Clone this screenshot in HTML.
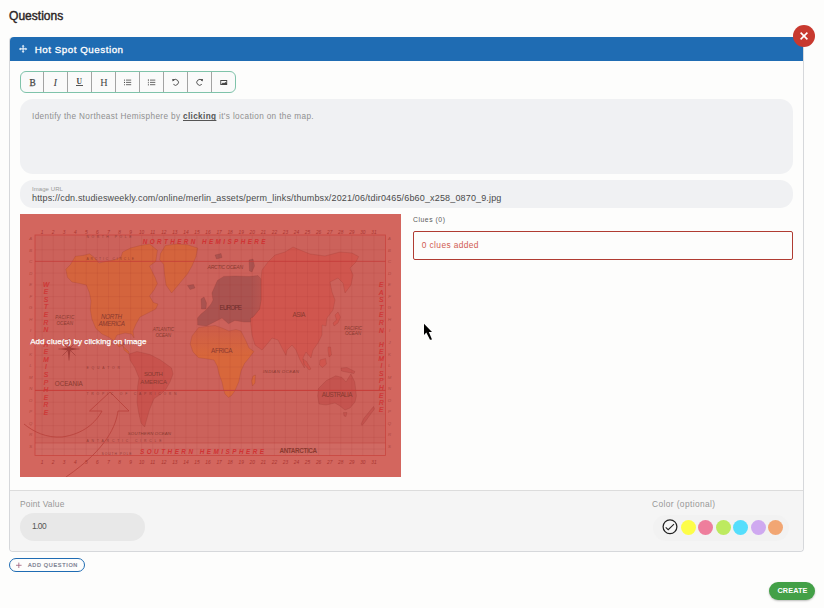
<!DOCTYPE html>
<html lang="en">
<head>
<meta charset="utf-8">
<title>Questions</title>
<style>
*{box-sizing:border-box;margin:0;padding:0}
html,body{width:824px;height:608px;overflow:hidden;background:#fdfdfc;font-family:"Liberation Sans",sans-serif;color:#444}
.abs{position:absolute}
.t{position:absolute;white-space:nowrap;line-height:1}
#title{left:9.2px;top:10.2px;font-size:12px;font-weight:400;-webkit-text-stroke:.4px #2b2424;color:#2b2424;transform-origin:0 0;transform:scaleX(1.005)}
#card{left:9px;top:37px;width:795px;height:515px;border:1px solid #d6d8db;border-top:none;border-radius:4px;background:#fdfdfc}
#hdr{left:10px;top:37px;width:793px;height:24px;background:#1f6cb3;border-radius:4px 4px 0 0}
#hdrtxt{left:34.7px;top:44.7px;font-size:9.8px;color:#fff;-webkit-text-stroke:.3px #fff;letter-spacing:0.520px}
#close{left:793px;top:25px;width:22px;height:22px;border-radius:50%;background:#c8392f}
#tb{left:20px;top:71px;width:216px;height:22px;border:1px solid #7fc3aa;border-radius:6px;background:#fafafa;overflow:hidden}
#tb i{position:absolute;top:0;width:1px;height:20px;background:#a3a3a3}
.tbi{font-family:"Liberation Serif",serif;font-size:9.5px;color:#444}
#ta{left:20px;top:99px;width:773px;height:75px;border-radius:13px;background:#f0f1f3}
#tatxt{left:32px;top:113.4px;font-size:8.2px;color:#8f8f8f;letter-spacing:0.366px}
#tatxt b{color:#555;text-decoration:underline}
#url{left:20px;top:180px;width:773px;height:28px;border-radius:13px;background:#f0f1f3}
#urllbl{left:32px;top:185.6px;font-size:6px;color:#999;letter-spacing:0.071px}
#urltxt{left:32px;top:194.2px;font-size:9px;color:#4a4a4a;letter-spacing:0.158px}
#map{left:20px;top:214px;width:381px;height:263px;background:#d3655d;overflow:hidden}
#maptxt{left:30.2px;top:338.2px;font-size:8px;color:#fff;-webkit-text-stroke:.25px #fff;letter-spacing:0.053px}
#clueslbl{left:413px;top:217.1px;font-size:6.8px;color:#5a5a5a;letter-spacing:0.547px}
#cluesbox{left:413px;top:231px;width:380px;height:29px;border:1px solid #b03c32;border-radius:2px;background:#fdfdfc}
#cluestxt{left:421.8px;top:240.9px;font-size:8.4px;color:#d05a50;letter-spacing:0.380px}
#foot{left:10px;top:490px;width:793px;height:61px;background:#f5f5f5;border-top:1px solid #dcdcdc;border-radius:0 0 4px 4px}
#pvlbl{left:20px;top:499.9px;font-size:8.4px;color:#979797;letter-spacing:0.207px}
#pv{left:20px;top:513px;width:125px;height:28px;border-radius:14px;background:#e8e8e8}
#pvtxt{left:32px;top:521.9px;font-size:8.4px;color:#555;letter-spacing:-0.578px}
#collbl{left:652px;top:499.9px;font-size:8.4px;color:#979797;letter-spacing:0.390px}
#colpill{left:653px;top:515px;width:136px;height:26px;border-radius:13px;background:#f2f2f2}
.dot{position:absolute;top:519.5px;width:15px;height:15px;border-radius:50%}
#addq{left:9px;top:558px;width:76px;height:14px;border:1px solid #1f6cb3;border-radius:7px;background:#fdfdfc}
#addqtxt{left:28px;top:563.3px;font-size:5.5px;color:#74788a;letter-spacing:0.677px;font-weight:400;-webkit-text-stroke:.2px #74788a}
#create{left:769px;top:582px;width:46px;height:18px;border-radius:9px;background:#43a047;box-shadow:0 1px 2px rgba(0,0,0,.25)}
#createtxt{left:777.5px;top:586.8px;font-size:7.3px;color:#fff;font-weight:700;letter-spacing:0.089px}
</style>
</head>
<body>
<div id="title" class="t">Questions</div>

<div id="card" class="abs"></div>
<div id="hdr" class="abs"></div>
<svg class="abs" style="left:18px;top:44px" width="11" height="11" viewBox="-5.5 -5.5 11 11"><g transform="translate(-.4 -.6)"><path d="M0 -4.2 L1.5 -2.4 H.55 V-.55 H2.4 V-1.5 L4.2 0 L2.4 1.5 V.55 H.55 V2.4 H1.5 L0 4.2 L-1.5 2.4 H-.55 V.55 H-2.4 V1.5 L-4.2 0 L-2.4 -1.5 V-.55 H-.55 V-2.4 H-1.5 Z" fill="#e8f1fa"/></g></svg>
<div id="hdrtxt" class="t">Hot Spot Question</div>
<div id="close" class="abs"><svg width="22" height="22" viewBox="0 0 22 22"><path d="M7.6 7.6 L14.4 14.4 M14.4 7.6 L7.6 14.4" stroke="#fff" stroke-width="1.6" fill="none"/></svg></div>

<div id="tb" class="abs">
<i style="left:22px"></i><i style="left:46px"></i><i style="left:70px"></i><i style="left:94px"></i><i style="left:118px"></i><i style="left:142px"></i><i style="left:166px"></i><i style="left:190px"></i>
</div>
<div class="t tbi" style="left:29.6px;top:78.6px;font-size:9.3px;-webkit-text-stroke:.25px #444">B</div>
<div class="t tbi" style="left:53.8px;top:78.6px;font-style:italic;font-size:9.3px;-webkit-text-stroke:.15px #444">I</div>
<div class="t tbi" style="left:76.4px;top:78.4px;font-size:7.6px;font-weight:700">U</div>
<div class="abs" style="left:76.2px;top:85px;width:7.2px;height:1px;background:#555"></div>
<div class="t tbi" style="left:100.3px;top:78px;font-size:10.2px">H</div>
<svg class="abs" style="left:116px;top:71px" width="120" height="22" viewBox="116 71 120 22">
<g fill="none" stroke="#444" stroke-width=".8">
<path d="M126 80.1H131.2M126 82.4H131.2M126 84.7H131.2"/>
<path d="M150 80.1H155.3M150 82.4H155.3M150 84.7H155.3"/>
<path d="M148.4 79.2V81M148.4 81.8V83.2M148.4 83.9V85.5" stroke-width=".7"/>
<path d="M173.2 80.6 A2.9 2.9 0 1 1 173.4 84.3" stroke-width=".9"/>
<path d="M202 80.6 A2.9 2.9 0 1 0 201.8 84.3" stroke-width=".9"/>
</g>
<g fill="#444">
<circle cx="124.5" cy="80.1" r=".55"/><circle cx="124.5" cy="82.4" r=".55"/><circle cx="124.5" cy="84.7" r=".55"/>
<path d="M172.2 78.9 L175 79.2 L172.6 81.6Z"/>
<path d="M203 78.9 L200.2 79.2 L202.6 81.6Z"/>
<path d="M220.3 80H227.2V85.1H220.3Z M221.2 80.9V84.2L223 82.4L224 83.3L225.4 81.9L226.3 82.8V80.9Z" fill-rule="evenodd"/>
</g>
</svg>

<div id="ta" class="abs"></div>
<div id="tatxt" class="t">Identify the Northeast Hemisphere by <b>clicking</b> it's location on the map.</div>

<div id="url" class="abs"></div>
<div id="urllbl" class="t">Image URL</div>
<div id="urltxt" class="t">https://cdn.studiesweekly.com/online/merlin_assets/perm_links/thumbsx/2021/06/tdir0465/6b60_x258_0870_9.jpg</div>

<div id="map" class="abs"></div>
<!--MAP-->
<svg class="abs" id="mapsvg" style="left:20px;top:214px" width="381" height="263" viewBox="20 214 381 263" font-family="Liberation Sans, sans-serif">
<defs><linearGradient id="eug" gradientUnits="userSpaceOnUse" x1="250" y1="0" x2="262" y2="0"><stop offset="0" stop-color="#aa5350"/><stop offset="1" stop-color="#b85550"/></linearGradient><linearGradient id="afg" gradientUnits="userSpaceOnUse" x1="0" y1="326" x2="0" y2="356"><stop offset="0" stop-color="#cd5d49"/><stop offset="1" stop-color="#d8673b"/></linearGradient></defs>
<rect x="20" y="214" width="381" height="263" fill="#d3665e"/>
<rect x="35" y="235" width="350.5" height="220.5" fill="#cc625b"/>
<rect x="35" y="443" width="350.5" height="12.5" fill="#d06a63"/>
<polygon points="268.0,262.0 275.0,255.0 285.0,252.0 293.0,247.0 300.0,250.0 310.0,254.0 325.0,256.0 340.0,252.0 352.0,253.0 358.7,256.6 356.0,262.0 350.0,268.0 353.0,275.0 351.0,285.0 345.0,293.0 343.0,283.0 338.0,278.0 330.0,282.0 332.0,292.0 335.0,300.0 333.0,310.0 327.0,318.0 326.0,326.0 322.0,325.0 322.0,335.0 318.0,343.0 313.0,350.0 311.0,358.0 306.0,352.0 303.0,358.0 304.5,368.0 300.0,360.0 296.0,350.0 292.0,345.0 287.0,350.0 286.0,355.5 282.0,348.0 278.0,340.0 272.0,338.0 268.0,343.0 262.0,350.0 255.0,345.0 252.0,335.0 250.6,322.0 250.6,318.0 253.0,317.0 259.5,309.0 261.0,300.0 261.0,279.0 262.0,270.0" fill="#d0564e" stroke="rgba(120,40,35,.3)" stroke-width=".5" stroke-linejoin="round"/>
<polygon points="197.7,325.0 197.5,318.0 201.0,314.0 206.0,310.0 211.0,304.0 213.0,300.0 211.9,293.0 217.4,280.4 223.7,276.4 235.0,276.0 249.0,276.5 258.0,275.6 261.0,279.0 261.0,300.0 259.5,309.0 253.0,317.0 250.6,318.0 250.6,322.0 244.0,322.0 234.8,320.5 228.5,323.7 222.0,318.0 214.3,322.0 206.4,326.0" fill="url(#eug)" stroke="rgba(120,40,35,.3)" stroke-width=".5" stroke-linejoin="round"/>
<polygon points="201.0,299.0 204.0,297.0 206.5,303.0 206.0,309.0 201.5,309.0" fill="#aa5350" stroke="rgba(120,40,35,.3)" stroke-width=".5" stroke-linejoin="round"/>
<polygon points="187.5,285.5 193.5,284.5 195.0,288.0 190.0,289.5" fill="#aa5350" stroke="rgba(120,40,35,.3)" stroke-width=".5" stroke-linejoin="round"/>
<polygon points="249.0,260.0 253.0,259.0 254.5,266.0 252.0,272.0 249.5,271.0" fill="#aa5350" stroke="rgba(120,40,35,.3)" stroke-width=".5" stroke-linejoin="round"/>
<polygon points="215.0,255.0 221.0,253.5 222.0,257.5 216.5,259.0" fill="#aa5350" stroke="rgba(120,40,35,.3)" stroke-width=".5" stroke-linejoin="round"/>
<polygon points="75.3,256.3 83.2,255.4 89.5,253.8 94.2,257.4 99.0,263.0 106.0,261.4 114.8,259.8 121.0,257.0 122.7,252.0 130.6,248.0 140.0,245.6 149.5,244.0 157.4,250.3 155.8,261.4 149.5,266.0 155.0,277.2 157.4,283.5 154.2,289.8 149.5,296.0 153.4,302.5 158.0,304.0 155.8,309.0 146.0,314.0 140.0,317.0 136.0,324.0 133.0,331.0 134.0,338.0 131.5,334.0 125.0,333.0 117.0,335.0 114.0,341.0 119.0,347.0 123.0,345.0 124.0,350.0 129.0,354.0 129.0,352.0 122.7,346.0 114.8,341.4 108.5,337.0 102.0,334.0 95.8,328.4 91.9,319.0 90.3,309.5 91.0,301.0 89.5,293.0 86.3,285.0 80.0,283.5 72.0,282.0 67.4,277.2 65.8,269.3 70.5,264.5" fill="#d4643d" stroke="rgba(120,40,35,.3)" stroke-width=".5" stroke-linejoin="round"/>
<polygon points="160.5,253.5 165.3,245.6 176.3,244.0 187.4,244.8 197.7,248.0 196.0,256.7 192.0,266.0 187.4,274.0 179.5,283.5 171.6,293.0 166.0,285.0 164.5,274.0 163.7,264.5 159.7,259.8" fill="#d4643d" stroke="rgba(120,40,35,.3)" stroke-width=".5" stroke-linejoin="round"/>
<polygon points="129.0,354.0 137.0,351.5 150.0,354.5 160.5,360.0 171.6,368.0 173.0,374.0 170.0,382.0 166.0,389.0 161.0,394.0 154.0,398.6 149.5,409.7 146.3,420.8 144.7,427.0 141.0,423.0 138.5,412.0 137.0,402.0 137.7,386.0 139.0,378.0 135.0,368.0 130.0,360.0" fill="#c8534d" stroke="rgba(120,40,35,.3)" stroke-width=".5" stroke-linejoin="round"/>
<polygon points="198.5,327.6 206.0,326.5 215.0,325.5 222.0,328.0 229.0,331.0 236.0,329.5 241.0,331.0 246.0,341.0 249.0,348.0 254.0,351.5 249.0,358.0 244.5,363.5 241.0,371.0 238.7,382.0 234.8,391.0 231.5,395.5 228.5,397.4 225.0,394.0 223.7,390.0 222.0,382.0 219.0,374.0 217.4,366.4 214.0,360.0 208.0,359.0 198.5,357.7 193.0,352.0 190.2,344.0 192.0,336.0" fill="url(#afg)" stroke="rgba(120,40,35,.3)" stroke-width=".5" stroke-linejoin="round"/>
<polygon points="253.0,376.0 255.5,375.0 255.0,383.0 252.5,386.0 251.5,381.0" fill="#d7673d" stroke="rgba(120,40,35,.3)" stroke-width=".5" stroke-linejoin="round"/>
<polygon points="318.5,388.5 326.3,380.6 335.8,375.8 342.0,377.4 346.0,382.0 350.8,374.0 354.8,382.0 356.4,396.0 355.0,402.0 350.0,408.0 345.0,410.0 340.0,406.0 335.0,403.0 326.0,405.0 319.0,404.0 317.7,396.0" fill="#c5544f" stroke="rgba(120,40,35,.3)" stroke-width=".5" stroke-linejoin="round"/>
<polygon points="343.5,412.5 347.0,412.5 346.0,416.5 344.0,416.0" fill="#c5544f" stroke="rgba(120,40,35,.3)" stroke-width=".5" stroke-linejoin="round"/>
<polygon points="361.0,424.0 364.0,418.0 369.0,412.0 373.5,406.5 374.5,409.0 370.0,415.0 365.0,422.0 362.0,425.5" fill="#c5544f" stroke="rgba(120,40,35,.3)" stroke-width=".5" stroke-linejoin="round"/>
<polygon points="335.0,315.0 338.0,312.0 340.5,317.0 338.0,323.0 334.0,326.0 333.0,323.0 336.5,320.0" fill="#d0564e" stroke="rgba(120,40,35,.3)" stroke-width=".5" stroke-linejoin="round"/>
<polygon points="320.0,360.0 325.5,358.5 326.5,364.0 322.5,367.5 319.5,365.0" fill="#d0564e" stroke="rgba(120,40,35,.3)" stroke-width=".5" stroke-linejoin="round"/>
<polygon points="303.0,359.0 306.5,361.5 311.0,369.0 309.0,370.0 304.5,364.5" fill="#d0564e" stroke="rgba(120,40,35,.3)" stroke-width=".5" stroke-linejoin="round"/>
<polygon points="341.0,368.0 347.0,367.5 355.0,371.5 354.0,373.5 346.0,372.0 341.5,371.0" fill="#c5544f" stroke="rgba(120,40,35,.3)" stroke-width=".5" stroke-linejoin="round"/>
<polygon points="328.0,347.0 330.5,347.0 331.5,355.0 329.0,357.0 328.0,351.0" fill="#d0564e" stroke="rgba(120,40,35,.3)" stroke-width=".5" stroke-linejoin="round"/>
<path d="M42.1 235V455.5M53.2 235V455.5M64.2 235V455.5M75.3 235V455.5M86.3 235V455.5M97.4 235V455.5M108.5 235V455.5M119.5 235V455.5M130.6 235V455.5M141.6 235V455.5M152.7 235V455.5M163.8 235V455.5M174.8 235V455.5M185.9 235V455.5M196.9 235V455.5M208.0 235V455.5M219.1 235V455.5M230.1 235V455.5M241.2 235V455.5M252.2 235V455.5M263.3 235V455.5M274.4 235V455.5M285.4 235V455.5M296.5 235V455.5M307.5 235V455.5M318.6 235V455.5M329.7 235V455.5M340.7 235V455.5M351.8 235V455.5M362.8 235V455.5M373.9 235V455.5M35 249.7H385.5M35 261.4H385.5M35 273.1H385.5M35 284.9H385.5M35 296.6H385.5M35 308.3H385.5M35 320.0H385.5M35 331.8H385.5M35 343.5H385.5M35 355.2H385.5M35 367.0H385.5M35 378.7H385.5M35 390.4H385.5M35 402.2H385.5M35 413.9H385.5M35 425.6H385.5M35 437.4H385.5M35 449.1H385.5" stroke="rgba(150,45,40,.2)" stroke-width=".5" fill="none"/>
<rect x="35" y="235" width="350.5" height="220.5" fill="none" stroke="rgba(200,55,50,.7)" stroke-width=".8"/>
<path d="M35 261.4H385.5" stroke="rgba(199,58,55,.7)" stroke-width=".9"/><path d="M35 390.4H385.5" stroke="#c73d39" stroke-width="1"/>
<path d="M35 443H385.5" stroke="rgba(190,60,55,.6)" stroke-width=".7"/>
<path d="M110 392 L129 411 H118 C116 425 108 448 66 477 M110 392 L89.5 411 H102 C96 422 84 434 62 437 C46 438 34 432 24 424" fill="none" stroke="#b8403a" stroke-width=".8"/>
<g stroke="#9c3a36" stroke-width=".6" fill="none"><path d="M69 338V360.5M58.5 349H79.5M62.5 342.5L75.5 355.5M75.5 342.5L62.5 355.5"/></g>
<path d="M69 341 L70.5 347.5 L77 349 L70.5 350.5 L69 360 L67.5 350.5 L61 349 L67.5 347.5Z" fill="#a23c38"/>
<text x="142.8" y="243.6" font-size="6.3" fill="#cf3333" textLength="122.7" lengthAdjust="spacing" font-style="italic" font-weight="700">NORTHERN HEMISPHERE</text>
<text x="140" y="454" font-size="6.3" fill="#cf3333" textLength="124.0" lengthAdjust="spacing" font-style="italic" font-weight="700">SOUTHERN HEMISPHERE</text>
<text x="46" y="286.5" font-size="6.6" fill="#cf3333" text-anchor="middle" font-style="italic" stroke="#cf3333" stroke-width=".2">W</text>
<text x="46" y="294.1" font-size="6.6" fill="#cf3333" text-anchor="middle" font-style="italic" stroke="#cf3333" stroke-width=".2">E</text>
<text x="46" y="301.7" font-size="6.6" fill="#cf3333" text-anchor="middle" font-style="italic" stroke="#cf3333" stroke-width=".2">S</text>
<text x="46" y="309.3" font-size="6.6" fill="#cf3333" text-anchor="middle" font-style="italic" stroke="#cf3333" stroke-width=".2">T</text>
<text x="46" y="316.9" font-size="6.6" fill="#cf3333" text-anchor="middle" font-style="italic" stroke="#cf3333" stroke-width=".2">E</text>
<text x="46" y="324.5" font-size="6.6" fill="#cf3333" text-anchor="middle" font-style="italic" stroke="#cf3333" stroke-width=".2">R</text>
<text x="46" y="332.1" font-size="6.6" fill="#cf3333" text-anchor="middle" font-style="italic" stroke="#cf3333" stroke-width=".2">N</text>
<text x="46" y="346.5" font-size="6.6" fill="#cf3333" text-anchor="middle" font-style="italic" stroke="#cf3333" stroke-width=".2">H</text>
<text x="46" y="354.1" font-size="6.6" fill="#cf3333" text-anchor="middle" font-style="italic" stroke="#cf3333" stroke-width=".2">E</text>
<text x="46" y="361.7" font-size="6.6" fill="#cf3333" text-anchor="middle" font-style="italic" stroke="#cf3333" stroke-width=".2">M</text>
<text x="46" y="369.3" font-size="6.6" fill="#cf3333" text-anchor="middle" font-style="italic" stroke="#cf3333" stroke-width=".2">I</text>
<text x="46" y="376.9" font-size="6.6" fill="#cf3333" text-anchor="middle" font-style="italic" stroke="#cf3333" stroke-width=".2">S</text>
<text x="46" y="384.5" font-size="6.6" fill="#cf3333" text-anchor="middle" font-style="italic" stroke="#cf3333" stroke-width=".2">P</text>
<text x="46" y="392.1" font-size="6.6" fill="#cf3333" text-anchor="middle" font-style="italic" stroke="#cf3333" stroke-width=".2">H</text>
<text x="46" y="399.7" font-size="6.6" fill="#cf3333" text-anchor="middle" font-style="italic" stroke="#cf3333" stroke-width=".2">E</text>
<text x="46" y="407.3" font-size="6.6" fill="#cf3333" text-anchor="middle" font-style="italic" stroke="#cf3333" stroke-width=".2">R</text>
<text x="46" y="414.9" font-size="6.6" fill="#cf3333" text-anchor="middle" font-style="italic" stroke="#cf3333" stroke-width=".2">E</text>
<text x="381.3" y="287.0" font-size="6.6" fill="#cf3333" text-anchor="middle" font-style="italic" stroke="#cf3333" stroke-width=".2">E</text>
<text x="381.3" y="294.6" font-size="6.6" fill="#cf3333" text-anchor="middle" font-style="italic" stroke="#cf3333" stroke-width=".2">A</text>
<text x="381.3" y="302.2" font-size="6.6" fill="#cf3333" text-anchor="middle" font-style="italic" stroke="#cf3333" stroke-width=".2">S</text>
<text x="381.3" y="309.8" font-size="6.6" fill="#cf3333" text-anchor="middle" font-style="italic" stroke="#cf3333" stroke-width=".2">T</text>
<text x="381.3" y="317.4" font-size="6.6" fill="#cf3333" text-anchor="middle" font-style="italic" stroke="#cf3333" stroke-width=".2">E</text>
<text x="381.3" y="325.0" font-size="6.6" fill="#cf3333" text-anchor="middle" font-style="italic" stroke="#cf3333" stroke-width=".2">R</text>
<text x="381.3" y="332.6" font-size="6.6" fill="#cf3333" text-anchor="middle" font-style="italic" stroke="#cf3333" stroke-width=".2">N</text>
<text x="381.3" y="346.5" font-size="6.6" fill="#cf3333" text-anchor="middle" font-style="italic" stroke="#cf3333" stroke-width=".2">H</text>
<text x="381.3" y="353.8" font-size="6.6" fill="#cf3333" text-anchor="middle" font-style="italic" stroke="#cf3333" stroke-width=".2">E</text>
<text x="381.3" y="361.1" font-size="6.6" fill="#cf3333" text-anchor="middle" font-style="italic" stroke="#cf3333" stroke-width=".2">M</text>
<text x="381.3" y="368.4" font-size="6.6" fill="#cf3333" text-anchor="middle" font-style="italic" stroke="#cf3333" stroke-width=".2">I</text>
<text x="381.3" y="375.7" font-size="6.6" fill="#cf3333" text-anchor="middle" font-style="italic" stroke="#cf3333" stroke-width=".2">S</text>
<text x="381.3" y="383.0" font-size="6.6" fill="#cf3333" text-anchor="middle" font-style="italic" stroke="#cf3333" stroke-width=".2">P</text>
<text x="381.3" y="390.3" font-size="6.6" fill="#cf3333" text-anchor="middle" font-style="italic" stroke="#cf3333" stroke-width=".2">H</text>
<text x="381.3" y="397.6" font-size="6.6" fill="#cf3333" text-anchor="middle" font-style="italic" stroke="#cf3333" stroke-width=".2">E</text>
<text x="381.3" y="404.9" font-size="6.6" fill="#cf3333" text-anchor="middle" font-style="italic" stroke="#cf3333" stroke-width=".2">R</text>
<text x="381.3" y="412.2" font-size="6.6" fill="#cf3333" text-anchor="middle" font-style="italic" stroke="#cf3333" stroke-width=".2">E</text>
<text x="101" y="319" font-size="6.3" fill="#8a3a30" textLength="21.0" lengthAdjust="spacing" font-style="italic">NORTH</text>
<text x="98.5" y="326" font-size="6.3" fill="#8a3a30" textLength="26.5" lengthAdjust="spacing" font-style="italic">AMERICA</text>
<text x="55.3" y="318.6" font-size="4.6" fill="#8a3a30" textLength="19.0" lengthAdjust="spacing" font-style="italic">PACIFIC</text>
<text x="56.5" y="324.6" font-size="4.6" fill="#8a3a30" textLength="16.5" lengthAdjust="spacing" font-style="italic">OCEAN</text>
<text x="152.8" y="330.6" font-size="4.6" fill="#8a3a30" textLength="21.2" lengthAdjust="spacing" font-style="italic">ATLANTIC</text>
<text x="155.5" y="336.6" font-size="4.6" fill="#8a3a30" textLength="15.5" lengthAdjust="spacing" font-style="italic">OCEAN</text>
<text x="207.5" y="269.3" font-size="5" fill="#8a3a30" textLength="35.5" lengthAdjust="spacing" font-style="italic">ARCTIC OCEAN</text>
<text x="219.5" y="309.5" font-size="6.3" fill="#6e2e2c" textLength="22.5" lengthAdjust="spacing" >EUROPE</text>
<text x="292.5" y="317" font-size="6.3" fill="#8a3a30" textLength="13.0" lengthAdjust="spacing" >ASIA</text>
<text x="344.3" y="329.6" font-size="4.6" fill="#8a3a30" textLength="17.7" lengthAdjust="spacing" font-style="italic">PACIFIC</text>
<text x="345" y="335.4" font-size="4.6" fill="#8a3a30" textLength="16.0" lengthAdjust="spacing" font-style="italic">OCEAN</text>
<text x="211" y="352.8" font-size="6.3" fill="#8a3a30" textLength="21.5" lengthAdjust="spacing" >AFRICA</text>
<text x="263" y="373.3" font-size="4.4" fill="#8a3a30" textLength="36.0" lengthAdjust="spacing" font-style="italic">INDIAN OCEAN</text>
<text x="321.8" y="396.7" font-size="6.3" fill="#8a3a30" textLength="30.7" lengthAdjust="spacing" >AUSTRALIA</text>
<text x="279.5" y="452.5" font-size="6.3" fill="#8a3a30" textLength="37.5" lengthAdjust="spacing" font-weight="700">ANTARCTICA</text>
<text x="144" y="376" font-size="6" fill="#8a3a30" textLength="18.8" lengthAdjust="spacing" >SOUTH</text>
<text x="140.3" y="383.5" font-size="6" fill="#8a3a30" textLength="26.7" lengthAdjust="spacing" >AMERICA</text>
<text x="54.8" y="386" font-size="6.3" fill="#8a3a30" textLength="28.0" lengthAdjust="spacing" >OCEANIA</text>
<text x="127.8" y="434.8" font-size="4.4" fill="#8a3a30" textLength="43.2" lengthAdjust="spacing" font-style="italic">SOUTHERN OCEAN</text>
<text x="86.5" y="238.2" font-size="3.4" fill="rgba(125,45,40,.75)" textLength="45.0" lengthAdjust="spacing" >NORTH POLE</text>
<text x="86.5" y="260.3" font-size="3.4" fill="rgba(125,45,40,.75)" textLength="47.5" lengthAdjust="spacing" >ARCTIC CIRCLE</text>
<text x="86.5" y="345" font-size="3.4" fill="rgba(125,45,40,.75)" textLength="53.5" lengthAdjust="spacing" >TROPIC OF CANCER</text>
<text x="86.5" y="369.2" font-size="3.4" fill="rgba(125,45,40,.75)" textLength="33.5" lengthAdjust="spacing" >EQUATOR</text>
<text x="86.5" y="394.8" font-size="3.4" fill="rgba(125,45,40,.75)" textLength="90.0" lengthAdjust="spacing" >TROPIC OF CAPRICORN</text>
<text x="86.5" y="442.4" font-size="3.4" fill="rgba(125,45,40,.75)" textLength="75.0" lengthAdjust="spacing" >ANTARCTIC CIRCLE</text>
<text x="101.5" y="455" font-size="3.4" fill="rgba(125,45,40,.75)" textLength="30.0" lengthAdjust="spacing" >SOUTH POLE</text>
<text x="42.1" y="234" font-size="4.8" fill="#a93531" text-anchor="middle" font-style="italic">1</text>
<text x="42.1" y="464" font-size="4.8" fill="#a93531" text-anchor="middle" font-style="italic">1</text>
<text x="53.2" y="234" font-size="4.8" fill="#a93531" text-anchor="middle" font-style="italic">2</text>
<text x="53.2" y="464" font-size="4.8" fill="#a93531" text-anchor="middle" font-style="italic">2</text>
<text x="64.2" y="234" font-size="4.8" fill="#a93531" text-anchor="middle" font-style="italic">3</text>
<text x="64.2" y="464" font-size="4.8" fill="#a93531" text-anchor="middle" font-style="italic">3</text>
<text x="75.3" y="234" font-size="4.8" fill="#a93531" text-anchor="middle" font-style="italic">4</text>
<text x="75.3" y="464" font-size="4.8" fill="#a93531" text-anchor="middle" font-style="italic">4</text>
<text x="86.3" y="234" font-size="4.8" fill="#a93531" text-anchor="middle" font-style="italic">5</text>
<text x="86.3" y="464" font-size="4.8" fill="#a93531" text-anchor="middle" font-style="italic">5</text>
<text x="97.4" y="234" font-size="4.8" fill="#a93531" text-anchor="middle" font-style="italic">6</text>
<text x="97.4" y="464" font-size="4.8" fill="#a93531" text-anchor="middle" font-style="italic">6</text>
<text x="108.5" y="234" font-size="4.8" fill="#a93531" text-anchor="middle" font-style="italic">7</text>
<text x="108.5" y="464" font-size="4.8" fill="#a93531" text-anchor="middle" font-style="italic">7</text>
<text x="119.5" y="234" font-size="4.8" fill="#a93531" text-anchor="middle" font-style="italic">8</text>
<text x="119.5" y="464" font-size="4.8" fill="#a93531" text-anchor="middle" font-style="italic">8</text>
<text x="130.6" y="234" font-size="4.8" fill="#a93531" text-anchor="middle" font-style="italic">9</text>
<text x="130.6" y="464" font-size="4.8" fill="#a93531" text-anchor="middle" font-style="italic">9</text>
<text x="141.6" y="234" font-size="4.8" fill="#a93531" text-anchor="middle" font-style="italic">10</text>
<text x="141.6" y="464" font-size="4.8" fill="#a93531" text-anchor="middle" font-style="italic">10</text>
<text x="152.7" y="234" font-size="4.8" fill="#a93531" text-anchor="middle" font-style="italic">11</text>
<text x="152.7" y="464" font-size="4.8" fill="#a93531" text-anchor="middle" font-style="italic">11</text>
<text x="163.8" y="234" font-size="4.8" fill="#a93531" text-anchor="middle" font-style="italic">12</text>
<text x="163.8" y="464" font-size="4.8" fill="#a93531" text-anchor="middle" font-style="italic">12</text>
<text x="174.8" y="234" font-size="4.8" fill="#a93531" text-anchor="middle" font-style="italic">13</text>
<text x="174.8" y="464" font-size="4.8" fill="#a93531" text-anchor="middle" font-style="italic">13</text>
<text x="185.9" y="234" font-size="4.8" fill="#a93531" text-anchor="middle" font-style="italic">14</text>
<text x="185.9" y="464" font-size="4.8" fill="#a93531" text-anchor="middle" font-style="italic">14</text>
<text x="196.9" y="234" font-size="4.8" fill="#a93531" text-anchor="middle" font-style="italic">15</text>
<text x="196.9" y="464" font-size="4.8" fill="#a93531" text-anchor="middle" font-style="italic">15</text>
<text x="208.0" y="234" font-size="4.8" fill="#a93531" text-anchor="middle" font-style="italic">16</text>
<text x="208.0" y="464" font-size="4.8" fill="#a93531" text-anchor="middle" font-style="italic">16</text>
<text x="219.1" y="234" font-size="4.8" fill="#a93531" text-anchor="middle" font-style="italic">17</text>
<text x="219.1" y="464" font-size="4.8" fill="#a93531" text-anchor="middle" font-style="italic">17</text>
<text x="230.1" y="234" font-size="4.8" fill="#a93531" text-anchor="middle" font-style="italic">18</text>
<text x="230.1" y="464" font-size="4.8" fill="#a93531" text-anchor="middle" font-style="italic">18</text>
<text x="241.2" y="234" font-size="4.8" fill="#a93531" text-anchor="middle" font-style="italic">19</text>
<text x="241.2" y="464" font-size="4.8" fill="#a93531" text-anchor="middle" font-style="italic">19</text>
<text x="252.2" y="234" font-size="4.8" fill="#a93531" text-anchor="middle" font-style="italic">20</text>
<text x="252.2" y="464" font-size="4.8" fill="#a93531" text-anchor="middle" font-style="italic">20</text>
<text x="263.3" y="234" font-size="4.8" fill="#a93531" text-anchor="middle" font-style="italic">21</text>
<text x="263.3" y="464" font-size="4.8" fill="#a93531" text-anchor="middle" font-style="italic">21</text>
<text x="274.4" y="234" font-size="4.8" fill="#a93531" text-anchor="middle" font-style="italic">22</text>
<text x="274.4" y="464" font-size="4.8" fill="#a93531" text-anchor="middle" font-style="italic">22</text>
<text x="285.4" y="234" font-size="4.8" fill="#a93531" text-anchor="middle" font-style="italic">23</text>
<text x="285.4" y="464" font-size="4.8" fill="#a93531" text-anchor="middle" font-style="italic">23</text>
<text x="296.5" y="234" font-size="4.8" fill="#a93531" text-anchor="middle" font-style="italic">24</text>
<text x="296.5" y="464" font-size="4.8" fill="#a93531" text-anchor="middle" font-style="italic">24</text>
<text x="307.5" y="234" font-size="4.8" fill="#a93531" text-anchor="middle" font-style="italic">25</text>
<text x="307.5" y="464" font-size="4.8" fill="#a93531" text-anchor="middle" font-style="italic">25</text>
<text x="318.6" y="234" font-size="4.8" fill="#a93531" text-anchor="middle" font-style="italic">26</text>
<text x="318.6" y="464" font-size="4.8" fill="#a93531" text-anchor="middle" font-style="italic">26</text>
<text x="329.7" y="234" font-size="4.8" fill="#a93531" text-anchor="middle" font-style="italic">27</text>
<text x="329.7" y="464" font-size="4.8" fill="#a93531" text-anchor="middle" font-style="italic">27</text>
<text x="340.7" y="234" font-size="4.8" fill="#a93531" text-anchor="middle" font-style="italic">28</text>
<text x="340.7" y="464" font-size="4.8" fill="#a93531" text-anchor="middle" font-style="italic">28</text>
<text x="351.8" y="234" font-size="4.8" fill="#a93531" text-anchor="middle" font-style="italic">29</text>
<text x="351.8" y="464" font-size="4.8" fill="#a93531" text-anchor="middle" font-style="italic">29</text>
<text x="362.8" y="234" font-size="4.8" fill="#a93531" text-anchor="middle" font-style="italic">30</text>
<text x="362.8" y="464" font-size="4.8" fill="#a93531" text-anchor="middle" font-style="italic">30</text>
<text x="373.9" y="234" font-size="4.8" fill="#a93531" text-anchor="middle" font-style="italic">31</text>
<text x="373.9" y="464" font-size="4.8" fill="#a93531" text-anchor="middle" font-style="italic">31</text>
<text x="30.7" y="240.0" font-size="4.3" fill="#b14640" text-anchor="middle" font-style="italic">A</text>
<text x="389.5" y="240.0" font-size="4.3" fill="#b14640" text-anchor="middle" font-style="italic">A</text>
<text x="30.7" y="251.6" font-size="4.3" fill="#b14640" text-anchor="middle" font-style="italic">B</text>
<text x="389.5" y="251.6" font-size="4.3" fill="#b14640" text-anchor="middle" font-style="italic">B</text>
<text x="30.7" y="263.1" font-size="4.3" fill="#b14640" text-anchor="middle" font-style="italic">C</text>
<text x="389.5" y="263.1" font-size="4.3" fill="#b14640" text-anchor="middle" font-style="italic">C</text>
<text x="30.7" y="274.6" font-size="4.3" fill="#b14640" text-anchor="middle" font-style="italic">D</text>
<text x="389.5" y="274.6" font-size="4.3" fill="#b14640" text-anchor="middle" font-style="italic">D</text>
<text x="30.7" y="286.2" font-size="4.3" fill="#b14640" text-anchor="middle" font-style="italic">E</text>
<text x="389.5" y="286.2" font-size="4.3" fill="#b14640" text-anchor="middle" font-style="italic">E</text>
<text x="30.7" y="297.8" font-size="4.3" fill="#b14640" text-anchor="middle" font-style="italic">F</text>
<text x="389.5" y="297.8" font-size="4.3" fill="#b14640" text-anchor="middle" font-style="italic">F</text>
<text x="30.7" y="309.3" font-size="4.3" fill="#b14640" text-anchor="middle" font-style="italic">G</text>
<text x="389.5" y="309.3" font-size="4.3" fill="#b14640" text-anchor="middle" font-style="italic">G</text>
<text x="30.7" y="320.9" font-size="4.3" fill="#b14640" text-anchor="middle" font-style="italic">H</text>
<text x="389.5" y="320.9" font-size="4.3" fill="#b14640" text-anchor="middle" font-style="italic">H</text>
<text x="30.7" y="332.4" font-size="4.3" fill="#b14640" text-anchor="middle" font-style="italic">I</text>
<text x="389.5" y="332.4" font-size="4.3" fill="#b14640" text-anchor="middle" font-style="italic">I</text>
<text x="30.7" y="343.9" font-size="4.3" fill="#b14640" text-anchor="middle" font-style="italic">J</text>
<text x="389.5" y="343.9" font-size="4.3" fill="#b14640" text-anchor="middle" font-style="italic">J</text>
<text x="30.7" y="355.5" font-size="4.3" fill="#b14640" text-anchor="middle" font-style="italic">K</text>
<text x="389.5" y="355.5" font-size="4.3" fill="#b14640" text-anchor="middle" font-style="italic">K</text>
<text x="30.7" y="367.1" font-size="4.3" fill="#b14640" text-anchor="middle" font-style="italic">L</text>
<text x="389.5" y="367.1" font-size="4.3" fill="#b14640" text-anchor="middle" font-style="italic">L</text>
<text x="30.7" y="378.6" font-size="4.3" fill="#b14640" text-anchor="middle" font-style="italic">M</text>
<text x="389.5" y="378.6" font-size="4.3" fill="#b14640" text-anchor="middle" font-style="italic">M</text>
<text x="30.7" y="390.1" font-size="4.3" fill="#b14640" text-anchor="middle" font-style="italic">N</text>
<text x="389.5" y="390.1" font-size="4.3" fill="#b14640" text-anchor="middle" font-style="italic">N</text>
<text x="30.7" y="401.7" font-size="4.3" fill="#b14640" text-anchor="middle" font-style="italic">O</text>
<text x="389.5" y="401.7" font-size="4.3" fill="#b14640" text-anchor="middle" font-style="italic">O</text>
<text x="30.7" y="413.2" font-size="4.3" fill="#b14640" text-anchor="middle" font-style="italic">P</text>
<text x="389.5" y="413.2" font-size="4.3" fill="#b14640" text-anchor="middle" font-style="italic">P</text>
<text x="30.7" y="424.8" font-size="4.3" fill="#b14640" text-anchor="middle" font-style="italic">Q</text>
<text x="389.5" y="424.8" font-size="4.3" fill="#b14640" text-anchor="middle" font-style="italic">Q</text>
<text x="30.7" y="436.4" font-size="4.3" fill="#b14640" text-anchor="middle" font-style="italic">R</text>
<text x="389.5" y="436.4" font-size="4.3" fill="#b14640" text-anchor="middle" font-style="italic">R</text>
<text x="30.7" y="447.9" font-size="4.3" fill="#b14640" text-anchor="middle" font-style="italic">S</text>
<text x="389.5" y="447.9" font-size="4.3" fill="#b14640" text-anchor="middle" font-style="italic">S</text>
</svg>
<!--/MAP-->
<div id="maptxt" class="t">Add clue(s) by clicking on image</div>

<div id="clueslbl" class="t">Clues (0)</div>
<div id="cluesbox" class="abs"></div>
<div id="cluestxt" class="t">0 clues added</div>

<div id="foot" class="abs"></div>
<div id="pvlbl" class="t">Point Value</div>
<div id="pv" class="abs"></div>
<div id="pvtxt" class="t">1.00</div>
<div id="collbl" class="t">Color (optional)</div>
<div id="colpill" class="abs"></div>
<svg class="abs" style="left:661px;top:518px" width="18" height="18" viewBox="661 518 18 18"><circle cx="670" cy="526.7" r="6.9" fill="#f6f6f6" stroke="#222" stroke-width="1.25"/><path d="M665.7 527.4 L668.2 529.7 L674 524.1" fill="none" stroke="#222" stroke-width="1.05"/></svg>
<div class="dot" style="left:680.5px;background:#fdfd48"></div>
<div class="dot" style="left:697.5px;background:#ee7e9c"></div>
<div class="dot" style="left:715.5px;background:#bdea5f"></div>
<div class="dot" style="left:732.5px;background:#55defc"></div>
<div class="dot" style="left:750.5px;background:#cfa9f0"></div>
<div class="dot" style="left:767.5px;background:#f2a673"></div>

<div id="addq" class="abs"></div>
<div id="addqtxt" class="t">ADD QUESTION</div>
<svg class="abs" style="left:15px;top:562px" width="8" height="7" viewBox="15 562 8 7"><path d="M16 565.3H21.6M18.8 562.6V568" stroke="#a0607a" stroke-width=".8" fill="none"/></svg>
<svg class="abs" style="left:420px;top:320px" width="16" height="24" viewBox="420 320 16 24"><path d="M424 323.8V334.9L426.3 332.6L430 339.8L432 339.6L428.8 331.9H432Z" fill="#000" stroke="#fff" stroke-width=".7" paint-order="stroke"/></svg>
<div id="create" class="abs"></div>
<div id="createtxt" class="t">CREATE</div>
</body>
</html>
